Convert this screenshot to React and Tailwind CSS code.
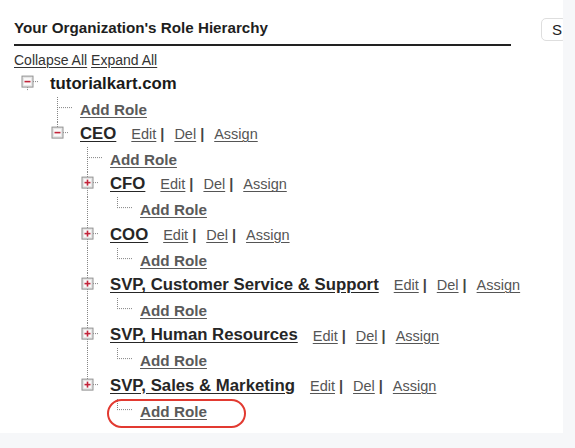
const ROW_H = 25.2

const rows = [
  { d: 0, kind: 'node', icon: 'minus', label: 'tutorialkart.com', root: true, last: true, guides: [] },
  { d: 1, kind: 'add', last: false, guides: [] },
  { d: 1, kind: 'node', icon: 'minus', label: 'CEO', last: true, guides: [] },
  { d: 2, kind: 'add', last: false, guides: [] },
  { d: 2, kind: 'node', icon: 'plus', label: 'CFO', last: false, guides: [] },
  { d: 3, kind: 'add', last: true, guides: [2] },
  { d: 2, kind: 'node', icon: 'plus', label: 'COO', last: false, guides: [] },
  { d: 3, kind: 'add', last: true, guides: [2] },
  { d: 2, kind: 'node', icon: 'plus', label: 'SVP, Customer Service & Support', last: false, guides: [] },
  { d: 3, kind: 'add', last: true, guides: [2] },
  { d: 2, kind: 'node', icon: 'plus', label: 'SVP, Human Resources', last: false, guides: [] },
  { d: 3, kind: 'add', last: true, guides: [2] },
  { d: 2, kind: 'node', icon: 'plus', label: 'SVP, Sales & Marketing', last: true, guides: [] },
  { d: 3, kind: 'add', last: true, guides: [] },
]

const colX = (d) => 27 + 30 * d

function Connector({ row }) {
  const cx = colX(row.d)
  const w = cx + 23
  const mid = ROW_H / 2 - 2.5
  const dot = { stroke: '#858585', strokeWidth: 1, strokeDasharray: '1 1' }

  return (
    <svg width={w} height={ROW_H} className="shrink-0 block">
      {row.guides.map((g) => (
        <line key={g} x1={colX(g) + 0.5} y1={0} x2={colX(g) + 0.5} y2={ROW_H} {...dot} />
      ))}

      {row.kind === 'add' && (
        <g>
          <line x1={cx + 0.5} y1={0} x2={cx + 0.5} y2={row.last ? mid : ROW_H} {...dot} />
          <line x1={cx} y1={mid + 0.5} x2={cx + 15} y2={mid + 0.5} {...dot} />
        </g>
      )}

      {row.kind === 'node' && (
        <g>
          {!row.root && <line x1={cx + 0.5} y1={0} x2={cx + 0.5} y2={mid - 5} {...dot} />}
          {!row.last && <line x1={cx + 0.5} y1={mid + 6} x2={cx + 0.5} y2={ROW_H} {...dot} />}
          {row.root && <line x1={cx + 0.5} y1={mid + 6} x2={cx + 0.5} y2={mid + 9} {...dot} />}
          <line x1={cx + 6} y1={mid + 0.5} x2={cx + 12} y2={mid + 0.5} {...dot} />
          <rect x={cx - 5} y={mid - 5} width={11} height={11} fill="#e6e6e6" stroke="#929292" />
          <rect x={cx - 3} y={mid - 3} width={7} height={7} fill="#fafafa" />
          <line x1={cx - 2.5} y1={mid + 0.5} x2={cx + 3.5} y2={mid + 0.5} stroke="#c2243a" strokeWidth={1.6} />
          {row.icon === 'plus' && (
            <line x1={cx + 0.5} y1={mid - 2.5} x2={cx + 0.5} y2={mid + 3.5} stroke="#c2243a" strokeWidth={1.6} />
          )}
        </g>
      )}
    </svg>
  )
}

function Actions() {
  return (
    <div className="flex items-center ml-[15px] text-[14.5px] text-[#555]">
      <span className="underline decoration-1 underline-offset-2">Edit</span>
      <span className="ml-[4px] mr-[10px] font-bold text-[#444] text-[14.5px]">|</span>
      <span className="underline decoration-1 underline-offset-2">Del</span>
      <span className="ml-[4px] mr-[10px] font-bold text-[#444] text-[14.5px]">|</span>
      <span className="underline decoration-1 underline-offset-2">Assign</span>
    </div>
  )
}

function TreeRow({ row }) {
  return (
    <div className="flex items-center h-[25.2px] leading-none whitespace-nowrap">
      <Connector row={row} />
      {row.kind === 'add' ? (
        <span className="font-bold text-[15.25px] text-[#5a5a5a] underline underline-offset-2">Add Role</span>
      ) : row.root ? (
        <span className="font-bold text-[16.75px] text-[#1a1a1a]">{row.label}</span>
      ) : (
        <>
          <span className="font-bold text-[16.75px] text-[#262626] underline underline-offset-2">{row.label}</span>
          <Actions />
        </>
      )}
    </div>
  )
}

export default function App() {
  return (
    <div
      className="w-[575px] h-[448px] bg-[#f6f7f9]"
      style={{ fontFamily: '"Liberation Sans", Arial, sans-serif' }}
    >
      <div className="w-[563px] h-[433px] bg-white overflow-hidden">
        <div className="flex items-start pt-[18px]">
          <div className="ml-[14px] w-[497px] shrink-0 border-b-2 border-[#222] pb-[6px]">
            <h2 className="font-bold text-[15.2px] leading-[20px] text-[#1e1e1e]">
              Your Organization's Role Hierarchy
            </h2>
          </div>
          <div className="ml-[30px] h-[23px] w-[26px] shrink-0 rounded-[5px] border border-[#dedede] bg-white pl-[10px] text-[15px] leading-[21px] text-[#222]">
            S
          </div>
        </div>

        <div className="mt-[6px] pl-[14px] text-[14px] leading-[16px] text-[#333]">
          <span className="underline decoration-1 underline-offset-2">Collapse All</span>{' '}
          <span className="underline decoration-1 underline-offset-2">Expand All</span>
        </div>

        <div className="relative mt-[3.4px]">
          {rows.map((row, i) => (
            <TreeRow key={i} row={row} />
          ))}
          <div className="absolute left-[107px] top-[327.5px] w-[139px] h-[29px] rounded-full border-2 border-[#e23a31]" />
        </div>
      </div>
    </div>
  )
}
